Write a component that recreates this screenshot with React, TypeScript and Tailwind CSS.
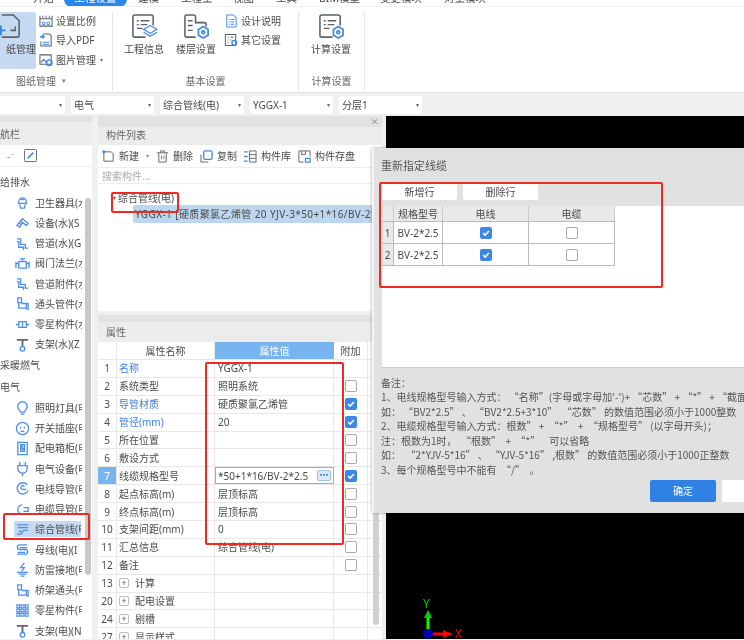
import React from "react";

const FONT = { fontFamily: '"Noto Sans", "Noto Sans CJK SC", sans-serif' };

const navGroups = [
  { title: "给排水", items: ["卫生器具(水", "设备(水)(S", "管道(水)(G", "阀门法兰(水", "管道附件(水", "通头管件(水", "零星构件(水", "支架(水)(Z"] },
  { title: "采暖燃气", items: [] },
  { title: "电气", items: ["照明灯具(电", "开关插座(电", "配电箱柜(电", "电气设备(电", "电线导管(电", "电缆导管(电", "综合管线(电", "母线(电)(I", "防雷接地(电", "桥架通头(电", "零星构件(电", "支架(电)(N"] },
];

const navIcons: Record<string, React.ReactNode> = {
  卫生器具: <path d="M4 7a4 4 0 0 1 8 0v2H4zM3 9h10M5 10l1 4h4l1-4M6 5h4" />,
  设备: <path d="M2 11l6-7 6 5-2 2-4-3-3 5zM6 6l3 3M4 8l3 3" />,
  管道: <path d="M2 3h4v6h5v4h3M2 6h2v6h5v3" />,
  阀门法兰: <path d="M1 6v7M15 6v7M1 8h3M12 8h3M4 6h8v7H4zM5 3h6M8 3v3" />,
  管道附件: <path d="M2 2h5v5H2zM7 8h6v6H7zM5 7v4h2M9 8V5h3" />,
  通头管件: <path d="M3 2h4v5H3zM4 7v6h8V8H7M12 8h2v6h-2" />,
  零星构件: <path d="M1 8h3M12 8h3M4 5h8v6H4zM8 5v6" />,
  照明灯具: <path d="M8 2a5 5 0 0 0-3 9l1 2h4l1-2a5 5 0 0 0-3-9zM6 15h4" />,
  开关插座: <path d="M8 1.5a6.5 6.5 0 1 0 0 13 6.5 6.5 0 0 0 0-13zM6 6v2M10 6v2M6 11h4" />,
  配电箱柜: <path d="M3 1.5h10v13H3zM6 4h4v7H6zM8 5l-1 3h2l-1 2" />,
  电气设备: <path d="M5 1v4M11 1v4M3 5h10v3a5 5 0 0 1-10 0zM8 13v3" />,
  电线导管: <path d="M13 4a6 6 0 1 0 1 6M12 9H8a2 2 0 1 1 2-3" />,
  电缆导管: <path d="M8 3a5 5 0 1 0 0 10h6M9 6h5v4H9" />,
  综合管线: <path d="M2 3h12M3 6h11M2 13h4c2 0 1-4 4-4h4M4 10h3" />,
  母线: <path d="M13 3H5a2.500 2.500 0 0 0 0 5h6a2.500 2.500 0 0 1 0 5H2M13 6H5M3 11h8" />,
  防雷接地: <path d="M10 1L6 6h4l-3 4M2 11h12M4 13h8M6 15h4" />,
  桥架通头: <path d="M3 2h4v5H3zM4 7v6h8V8H7M12 8h2v6h-2" />,
};

function NavIcon({ label }: { label: string }) {
  if (label.startsWith("支架")) {
    return (
      <svg viewBox="0 0 16 16" className="w-[15px] h-[15px] shrink-0" fill="none" strokeWidth="1.4">
        <path d="M2 3h12M8 3v8" stroke="#5b6675" strokeWidth="2" />
        <circle cx="8" cy="12.500" r="2.500" stroke="#4d90ea" />
      </svg>
    );
  }
  // the second 零星构件 row is a 3x3 block, the first one is a pipe stub
  if (label === "零星构件(电") {
    return (
      <svg viewBox="0 0 16 16" className="w-[15px] h-[15px] shrink-0" fill="none" stroke="#4d90ea" strokeWidth="1.2">
        <path d="M2 2h3v3H2zM6.500 2h3v3h-3zM11 2h3v3h-3zM2 6.500h3v3H2zM6.500 6.500h3v3h-3zM11 6.500h3v3h-3zM2 11h3v3H2zM6.500 11h3v3h-3zM11 11h3v3h-3z" />
      </svg>
    );
  }
  const key = Object.keys(navIcons).find((k) => label.startsWith(k));
  return (
    <svg viewBox="0 0 16 16" className="w-[15px] h-[15px] shrink-0" fill="none" stroke="#4d90ea" strokeWidth="1.4">
      {key ? navIcons[key] : null}
    </svg>
  );
}

function DocIcon({ badge }: { badge: "layers" | "gear" }) {
  return (
    <svg viewBox="0 0 28 28" className="w-[27px] h-[27px]" fill="none">
      <path d="M15 25H4a2 2 0 0 1-2-2V4a2 2 0 0 1 2-2h17a2 2 0 0 1 2 2v9" stroke="#59626e" strokeWidth="1.600" />
      <path d="M6 8h2M10 8h9M6 12h2M10 12h7M6 16h6" stroke="#59626e" strokeWidth="1.400" />
      {badge === "layers" ? (
        <g stroke="#4d90ea" strokeWidth="1.400">
          <path d="M20 13l7 4-7 4-7-4z" />
          <path d="M13 20l7 4 7-4" />
        </g>
      ) : (
        <g stroke="#3f8ae8" strokeWidth="1.800">
          <path d="M21 14l5 3v6l-5 3-5-3v-6z" />
          <circle cx="21" cy="20" r="1.500" />
        </g>
      )}
    </svg>
  );
}

function FloorIcon() {
  return (
    <svg viewBox="0 0 28 28" className="w-[27px] h-[27px]" fill="none">
      <path d="M13 25H4a2 2 0 0 1-2-2V4a2 2 0 0 1 2-2h7a2 2 0 0 1 2 2v6h9a2 2 0 0 1 2 2v2" stroke="#59626e" strokeWidth="1.600" />
      <path d="M5 8h5M5 13h5M5 18h5" stroke="#59626e" strokeWidth="1.400" />
      <g stroke="#3f8ae8" strokeWidth="1.800">
        <path d="M21 14l5 3v6l-5 3-5-3v-6z" />
        <circle cx="21" cy="20" r="1.500" />
      </g>
    </svg>
  );
}

function SmallRibbonIcon({ kind }: { kind: string }) {
  return (
    <svg viewBox="0 0 15 15" className="w-[14px] h-[14px] shrink-0" fill="none" strokeWidth="1.100">
      {kind === "scale" && (
        <g stroke="#59626e">
          <path d="M1 5h13v8H1zM1 2v3M14 2v3M4 2v2M7.500 2v2M11 2v2" />
          <circle cx="5" cy="10" r="1.500" stroke="#4d90ea" />
          <circle cx="10" cy="10" r="1.500" stroke="#4d90ea" />
        </g>
      )}
      {kind === "pdf" && (
        <g>
          <path d="M4 1h7l2 2v11H2V9" stroke="#59626e" />
          <path d="M1 4h4M3.500 2l2 2-2 2" stroke="#3f8ae8" strokeWidth="1.400" />
          <path d="M4 10h7M4 12h7" stroke="#3f8ae8" />
        </g>
      )}
      {kind === "image" && (
        <g>
          <path d="M1 2h12v10H1z" stroke="#59626e" />
          <path d="M2 10l3-3 3 3" stroke="#59626e" />
          <circle cx="11" cy="10.500" r="3" stroke="#3f8ae8" strokeWidth="1.600" />
        </g>
      )}
      {kind === "note" && (
        <g stroke="#4d90ea">
          <path d="M3 1h7l3 3v10H3z" />
          <path d="M5 6h1M7 6h4M5 8.500h1M7 8.500h4M5 11h1M7 11h4" />
        </g>
      )}
      {kind === "other" && (
        <g>
          <path d="M1.500 1.500h11v12h-11z" stroke="#59626e" />
          <path d="M4 4.500h1M7 4.500h3M4 7.500h1M7 7.500h1M4 10.500h1" stroke="#59626e" />
          <circle cx="11" cy="10.500" r="2.500" stroke="#3f8ae8" strokeWidth="1.500" />
        </g>
      )}
    </svg>
  );
}

function SmallItem({ kind, label, caret }: { kind: string; label: string; caret?: boolean }) {
  return (
    <div className="flex items-center gap-[3px] h-[19.500px]">
      <SmallRibbonIcon kind={kind} />
      <span>{label}</span>
      {caret && <span className="text-[6px] ml-[1px] text-[#777]">▾</span>}
    </div>
  );
}

function BigItem({ icon, label }: { icon: React.ReactNode; label: string }) {
  return (
    <div className="w-[42px] flex flex-col items-center">
      <div className="h-[29px] flex items-center">{icon}</div>
      <span className="mt-[1px] whitespace-nowrap">{label}</span>
    </div>
  );
}

function Group({ title, width, children, caret, titleCls }: { title: string; width: string; children: React.ReactNode; caret?: boolean; titleCls?: string }) {
  return (
    <div className={`${width} h-[79px] border-r border-[#e6e6e6] flex flex-col shrink-0`}>
      <div className="h-[58px] flex">{children}</div>
      <div className={`h-[21px] flex items-center justify-center text-[#666] gap-[6px] ${titleCls ?? ""}`}>
        {title}
        {caret && <span className="text-[7px] text-[#777]">▾</span>}
      </div>
    </div>
  );
}

function Combo({ label, width }: { label: string; width: string }) {
  return (
    <div className={`${width} h-[18px] bg-white rounded-[2px] flex items-center justify-between pl-[3px] pr-[3px]`}>
      <span>{label}</span>
      <span className="text-[6px] text-[#666]">▾</span>
    </div>
  );
}

function ToolBtn({ icon, label }: { icon: React.ReactNode; label: string }) {
  return (
    <div className="flex items-center gap-[4px]">
      {icon}
      <span>{label}</span>
    </div>
  );
}

function Check({ on }: { on: boolean }) {
  return on ? (
    <div className="w-[12px] h-[12px] rounded-[2px] bg-[#3b87e6] flex items-center justify-center">
      <svg viewBox="0 0 12 12" className="w-[10px] h-[10px]" fill="none" stroke="white" strokeWidth="1.800">
        <path d="M2.500 6l2.500 2.500 4.500-5" />
      </svg>
    </div>
  ) : (
    <div className="w-[12px] h-[12px] rounded-[2px] bg-white border border-[#aaa]" />
  );
}

const rows: { n: string; name: string; value?: string; blue?: boolean; check?: boolean | null; plus?: boolean }[] = [
  { n: "1", name: "名称", value: "YGGX-1", blue: true, check: null },
  { n: "2", name: "系统类型", value: "照明系统", check: false },
  { n: "3", name: "导管材质", value: "硬质聚氯乙烯管", blue: true, check: true },
  { n: "4", name: "管径(mm)", value: "20", blue: true, check: true },
  { n: "5", name: "所在位置", check: false },
  { n: "6", name: "敷设方式", check: false },
  { n: "7", name: "线缆规格型号", value: "*50+1*16/BV-2*2.5", check: true },
  { n: "8", name: "起点标高(m)", value: "层顶标高", check: false },
  { n: "9", name: "终点标高(m)", value: "层顶标高", check: false },
  { n: "10", name: "支架间距(mm)", value: "0", check: false },
  { n: "11", name: "汇总信息", value: "综合管线(电)", check: false },
  { n: "12", name: "备注", check: false },
  { n: "13", name: "计算", plus: true, check: null },
  { n: "20", name: "配电设置", plus: true, check: null },
  { n: "24", name: "剔槽", plus: true, check: null },
  { n: "27", name: "显示样式", plus: true, check: null },
];

const notes = [
  "1、电线规格型号输入方式： “名称”(字母或字母加'-')+ “芯数” + “*” + “截面",
  "如： “BV2*2.5” 、 “BV2*2.5+3*10”  “芯数” 的数值范围必须小于1000整数",
  "2、电缆规格型号输入方式：根数” +  “*”  +  “规格型号” (以字母开头)；",
  "注：根数为1时，  “根数”  +  “*”    可以省略",
  "如：  “2*YJV-5*16” 、 “YJV-5*16” ,根数” 的数值范围必须小于1000正整数",
  "3、每个规格型号中不能有  “/”  。",
];

export default function App() {
  return (
    <div style={FONT} className="relative w-[744px] h-[640px] overflow-hidden bg-[#f0f0f0] text-[10px] leading-[14px] text-[#4a4a4a] blur-[0.4px]">
      {/* tabs, cropped at the top */}
      <div className="h-[7px] bg-white overflow-hidden text-[10.500px] flex pl-[33px] border-b border-[#f3f3f3]">
        <div className="-mt-[9px] flex items-start">
          <span className="w-[31px]">开始</span>
          <span className="w-[63px] h-[16px] bg-[#2b86f0] text-white rounded-[8px] text-center">工程设置</span>
          <span className="ml-[11px] w-[43px]">建模</span>
          <span className="w-[52px]">工程量</span>
          <span className="w-[43px]">视图</span>
          <span className="w-[43px]">工具</span>
          <span className="w-[61px]">BIM模型</span>
          <span className="w-[64px]">变更模块</span>
          <span>对量模块</span>
        </div>
      </div>

      {/* ribbon */}
      <div className="h-[86px] bg-white border-b border-[#e4e4e4] flex pt-[5px]">
        <Group title="图纸管理" width="w-[113px]" caret titleCls="pr-[30px]">
          <div className="w-[36px] h-[57px] bg-[#c5daf0] rounded-r-[2px] overflow-hidden flex flex-col items-end shrink-0">
            <svg viewBox="0 0 28 28" className="w-[27px] h-[27px] mt-[1px] mr-[11px] shrink-0 -translate-x-[2px]" fill="none">
              <path d="M6 2h12l6 6v15a2 2 0 0 1-2 2H6" stroke="#59626e" strokeWidth="1.600" />
              <path d="M0 18h10M5 13v10" stroke="#2f86ea" strokeWidth="2" />
              <path d="M15 18h5v-4" stroke="#59626e" strokeWidth="1.600" />
            </svg>
            <span className="mt-[2px] whitespace-nowrap">纸管理</span>
          </div>
          <div className="ml-[3px] -mt-[1px]">
            <SmallItem kind="scale" label="设置比例" />
            <SmallItem kind="pdf" label="导入PDF" />
            <SmallItem kind="image" label="图片管理" caret />
          </div>
        </Group>
        <Group title="基本设置" width="w-[186px]">
          <div className="ml-[10px] mr-[10px]">
            <BigItem icon={<DocIcon badge="layers" />} label="工程信息" />
          </div>
          <BigItem icon={<FloorIcon />} label="楼层设置" />
          <div className="ml-[7px] -mt-[1px]">
            <SmallItem kind="note" label="设计说明" />
            <SmallItem kind="other" label="其它设置" />
          </div>
        </Group>
        <Group title="计算设置" width="w-[66px]">
          <div className="ml-[11px]">
            <BigItem icon={<DocIcon badge="gear" />} label="计算设置" />
          </div>
        </Group>
      </div>

      {/* combo row */}
      <div className="h-[22px] flex items-center gap-[6px] -ml-[15px] pt-[1px]">
        <Combo label="层" width="w-[80px]" />
        <Combo label="电气" width="w-[83px]" />
        <Combo label="综合管线(电)" width="w-[84px]" />
        <Combo label="YGGX-1" width="w-[83px]" />
        <Combo label="分层1" width="w-[83px]" />
      </div>

      <div className="flex h-[524px] pt-[1px]">
        {/* navigation */}
        <div className="w-[92px] shrink-0 bg-white relative overflow-hidden">
          <div className="h-[29px] bg-[#ececec] text-[#666]">
            <div className="h-[6px] bg-[#e2e2e2]" />
            <div className="pt-[5px]">航栏</div>
          </div>
          <div className="h-[22px] flex items-center pl-[7px] gap-[10px] border-b border-[#eee]">
            <span className="text-[#4d90ea]">-⁻</span>
            <svg viewBox="0 0 14 14" className="w-[13px] h-[13px]" fill="none">
              <rect x="0.500" y="0.500" width="13" height="13" rx="1" stroke="#59626e" />
              <path d="M4 10l6-6" stroke="#4d90ea" strokeWidth="2" />
            </svg>
          </div>
          <div className="pt-[4px] pl-0 pr-[10px]">
            {navGroups.map((g) => (
              <div key={g.title}>
                <div className="h-[21.500px] flex items-center whitespace-nowrap overflow-hidden">{g.title}</div>
                {g.items.map((item) => (
                  <div key={item} className="h-[20.270px] flex items-center pl-[15px] whitespace-nowrap overflow-hidden">
                    <div className={`flex items-center gap-[5px] h-[16px] w-full ${item.startsWith("综合管线") ? "bg-[#c5daf0] -ml-[1px] pl-[1px]" : ""}`}>
                      <NavIcon label={item} />
                      <span className="overflow-hidden">{item}</span>
                    </div>
                  </div>
                ))}
              </div>
            ))}
          </div>
          <div className="absolute right-[1px] top-[82px] w-[6px] h-[377px] bg-[#c8c8c8] rounded-[3px]" />
        </div>

        {/* component list + properties */}
        <div className="w-[284px] shrink-0 ml-[6px] mr-[4px] flex flex-col">
          <div className="h-[195px] bg-white">
            <div className="h-[29px] bg-[#ececec] text-[#666] relative">
              <div className="h-[11px] bg-[#e2e2e2]" />
              <div className="pl-[8px] pt-[1px]">构件列表</div>
              <span className="absolute right-[3px] top-[-1px] text-[#999] text-[9px]">✕</span>
            </div>
            <div className="h-[23px] flex items-center pl-[4px] gap-[7px] border-b border-[#eee]">
              <ToolBtn
                label="新建"
                icon={
                  <svg viewBox="0 0 14 14" className="w-[13px] h-[13px]" fill="none">
                    <path d="M2 2v10h10V4l-2-2H2" stroke="#59626e" />
                    <path d="M0 2h4M2 0v4" stroke="#3f8ae8" strokeWidth="1.300" />
                  </svg>
                }
              />
              <span className="text-[6px] text-[#888]">▾</span>
              <ToolBtn
                label="删除"
                icon={
                  <svg viewBox="0 0 14 14" className="w-[13px] h-[13px]" fill="none" stroke="#59626e">
                    <path d="M1 3h12M3 3v10h8V3M5 3V1h4v2" />
                    <path d="M6 6v4M8.500 6v4" stroke="#e2574c" />
                  </svg>
                }
              />
              <ToolBtn
                label="复制"
                icon={
                  <svg viewBox="0 0 14 14" className="w-[13px] h-[13px]" fill="none">
                    <path d="M1 5v8h8" stroke="#59626e" />
                    <rect x="4" y="1" width="9" height="9" rx="1.500" stroke="#3f8ae8" strokeWidth="1.400" />
                  </svg>
                }
              />
              <ToolBtn
                label="构件库"
                icon={
                  <svg viewBox="0 0 14 14" className="w-[13px] h-[13px]" fill="none">
                    <path d="M0 2h4M0 7h4M0 12h4" stroke="#3f8ae8" strokeWidth="1.400" />
                    <path d="M6 1h7v12H6zM6 5h7M6 9h7" stroke="#59626e" />
                  </svg>
                }
              />
              <ToolBtn
                label="构件存盘"
                icon={
                  <svg viewBox="0 0 14 14" className="w-[13px] h-[13px]" fill="none">
                    <path d="M6 13H1V1h12v6M4 1v4h4V1" stroke="#59626e" />
                    <path d="M8 9h5v4H8z" stroke="#3f8ae8" strokeWidth="1.300" />
                  </svg>
                }
              />
            </div>
            <div className="h-[16px] flex items-center pl-[4px] text-[#aaa] border-b border-[#eee]">搜索构件...</div>
            <div className="relative pt-[5px] pl-[15px] whitespace-nowrap overflow-hidden">
              <div className="h-[17px] flex items-center gap-[1px]">
                <span className="text-[6px] text-[#666]">▾</span>
                <span className="pl-[1px]">综合管线(电)</span>
              </div>
              <div className="ml-[20px] h-[18px] -mt-[1px] bg-[#bcd6f0] rounded-l-[2px] pl-[2px] flex items-center tracking-[0.4px]">
                YGGX-1 [硬质聚氯乙烯管 20 YJV-3*50+1*16/BV-2*2.5]
              </div>
            </div>
          </div>

          <div className="mt-[4px] flex-1 bg-white relative overflow-hidden">
            <div className="h-[27px] bg-[#ececec] text-[#666]">
              <div className="h-[7px] bg-[#e2e2e2]" />
              <div className="pl-[8px] pt-[3px]">属性</div>
            </div>
            <div className="grid grid-cols-[19px_98px_119px_34px] h-[18px] border-b border-[#e8e8e8]">
              <div className="border-r border-[#e8e8e8]" />
              <div className="border-r border-[#e8e8e8] flex items-center justify-center">属性名称</div>
              <div className="bg-[#78b4f0] text-white flex items-center justify-center">属性值</div>
              <div className="border-r border-[#e8e8e8] flex items-center justify-center">附加</div>
            </div>
            {rows.map((r) => (
              <div key={r.n} className="grid grid-cols-[19px_98px_119px_34px] h-[17.900px] border-b border-[#e8e8e8]">
                <div className={`border-r border-[#e8e8e8] flex items-center justify-center ${r.n === "7" ? "bg-[#78b4f0] text-white" : ""}`}>{r.n}</div>
                <div className={`border-r border-[#e8e8e8] flex items-center pl-[2px] gap-[6px] whitespace-nowrap ${r.blue ? "text-[#3f7fe8]" : ""}`}>
                  {r.plus && (
                    <span className="w-[10px] h-[10px] border border-[#bbb] rounded-[2px] flex items-center justify-center text-[8px] leading-none">+</span>
                  )}
                  {r.name}
                </div>
                {r.n === "7" ? (
                  <div className="border border-[#78b4f0] flex items-center justify-between pl-[2px] pr-[2px] whitespace-nowrap">
                    <span>{r.value}</span>
                    <span className="w-[14px] h-[11px] bg-[#dce9f7] border border-[#9cc3ee] rounded-[2px] text-[#3f7fe8] text-[8px] leading-[7px] text-center">•••</span>
                  </div>
                ) : (
                  <div className="border-r border-[#e8e8e8] flex items-center pl-[3px] whitespace-nowrap">{r.value}</div>
                )}
                <div className="border-r border-[#e8e8e8] flex items-center justify-center">
                  {r.check !== null && r.check !== undefined && <Check on={r.check} />}
                </div>
              </div>
            ))}
            <div className="absolute right-[3px] top-[27px] w-[6px] h-[283px] bg-[#d0d0d0] rounded-[3px]" />
          </div>
        </div>

        {/* drawing canvas */}
        <div className="flex-1 bg-black relative">
          <svg viewBox="0 0 50 50" className="absolute left-[33px] bottom-[-5px] w-[50px] h-[50px]" fill="none">
            <path d="M9 40V20" stroke="#00ff00" strokeWidth="3" />
            <path d="M5 24l4-8 4 8z" fill="#00d000" />
            <path d="M9 40h20" stroke="#ff0000" strokeWidth="3" />
            <path d="M24 36l10 4-10 4z" fill="#ff0000" />
            <circle cx="9" cy="40" r="5" fill="#0000b0" />
          </svg>
          <span className="absolute left-[37px] bottom-[28px] text-[#00d000] text-[12px]">Y</span>
          <span className="absolute left-[69px] bottom-[-2px] text-[#ff0000] text-[12px]">X</span>
        </div>
      </div>

      {/* re-assign cable dialog */}
      <div className="absolute left-[372px] top-[148px] w-[372px] h-[365px] bg-[#e1e1e1] shadow-[0_0_3px_rgba(0,0,0,0.35)] border-l-2 border-[#f5f5f5]">
        <div className="pl-[7px] pt-[11px] text-[11px] text-[#555]">重新指定线缆</div>
        <div className="flex gap-[6px] pl-[8px] mt-[10px]">
          <div className="w-[75px] h-[17px] bg-white rounded-[2px] flex items-center justify-center">新增行</div>
          <div className="w-[75px] h-[17px] bg-white rounded-[2px] flex items-center justify-center">删除行</div>
        </div>
        <div className="ml-[8px] mt-[6px] h-[162px] bg-white border-b border-[#ccc]">
          <div className="grid grid-cols-[12px_49px_86px_86px] w-[233px] bg-[#e9e9e9] border-b border-[#bbb]">
            <div className="h-[15px] border-r border-[#ccc]" />
            <div className="flex items-center justify-center border-r border-[#ccc] h-[15px]">规格型号</div>
            <div className="flex items-center justify-center border-r border-[#ccc] h-[15px]">电线</div>
            <div className="flex items-center justify-center border-r border-[#ccc] h-[15px]">电缆</div>
          </div>
          {["1", "2"].map((n) => (
            <div key={n} className="grid grid-cols-[12px_49px_86px_86px] w-[233px] h-[22px] border-b border-[#bbb]">
              <div className="bg-[#e9e9e9] border-r border-[#bbb] flex items-center justify-center">{n}</div>
              <div className="border-r border-[#bbb] flex items-center justify-center whitespace-nowrap">BV-2*2.5</div>
              <div className="border-r border-[#bbb] flex items-center justify-center">
                <Check on />
              </div>
              <div className="border-r border-[#bbb] flex items-center justify-center">
                <Check on={false} />
              </div>
            </div>
          ))}
        </div>
        <div className="pl-[7px] pt-[7.500px] leading-[14.500px] whitespace-pre text-[#555] font-['Noto_Sans_CJK_SC']">
          <div>备注：</div>
          {notes.map((line) => (
            <div key={line}>{line}</div>
          ))}
        </div>
        <div className="flex gap-[6px] pl-[276px] mt-[3px]">
          <div className="w-[66px] h-[22px] bg-[#2f82e4] rounded-[2px] text-white flex items-center justify-center shrink-0">确定</div>
          <div className="w-[66px] h-[22px] bg-white rounded-[2px] shrink-0" />
        </div>
      </div>

      {/* red annotation boxes drawn over the screenshot */}
      <div className="absolute left-[3px] top-[513px] w-[87px] h-[27px] border-2 border-[#f02a20] rounded-[2px]" />
      <div className="absolute left-[111px] top-[192px] w-[68px] h-[21px] border-2 border-[#f02a20] rounded-[2px]" />
      <div className="absolute left-[205px] top-[362px] w-[139px] h-[183px] border-2 border-[#f02a20] rounded-[2px]" />
      <div className="absolute left-[379px] top-[182px] w-[284px] h-[106px] border-2 border-[#f02a20] rounded-[2px]" />
    </div>
  );
}
